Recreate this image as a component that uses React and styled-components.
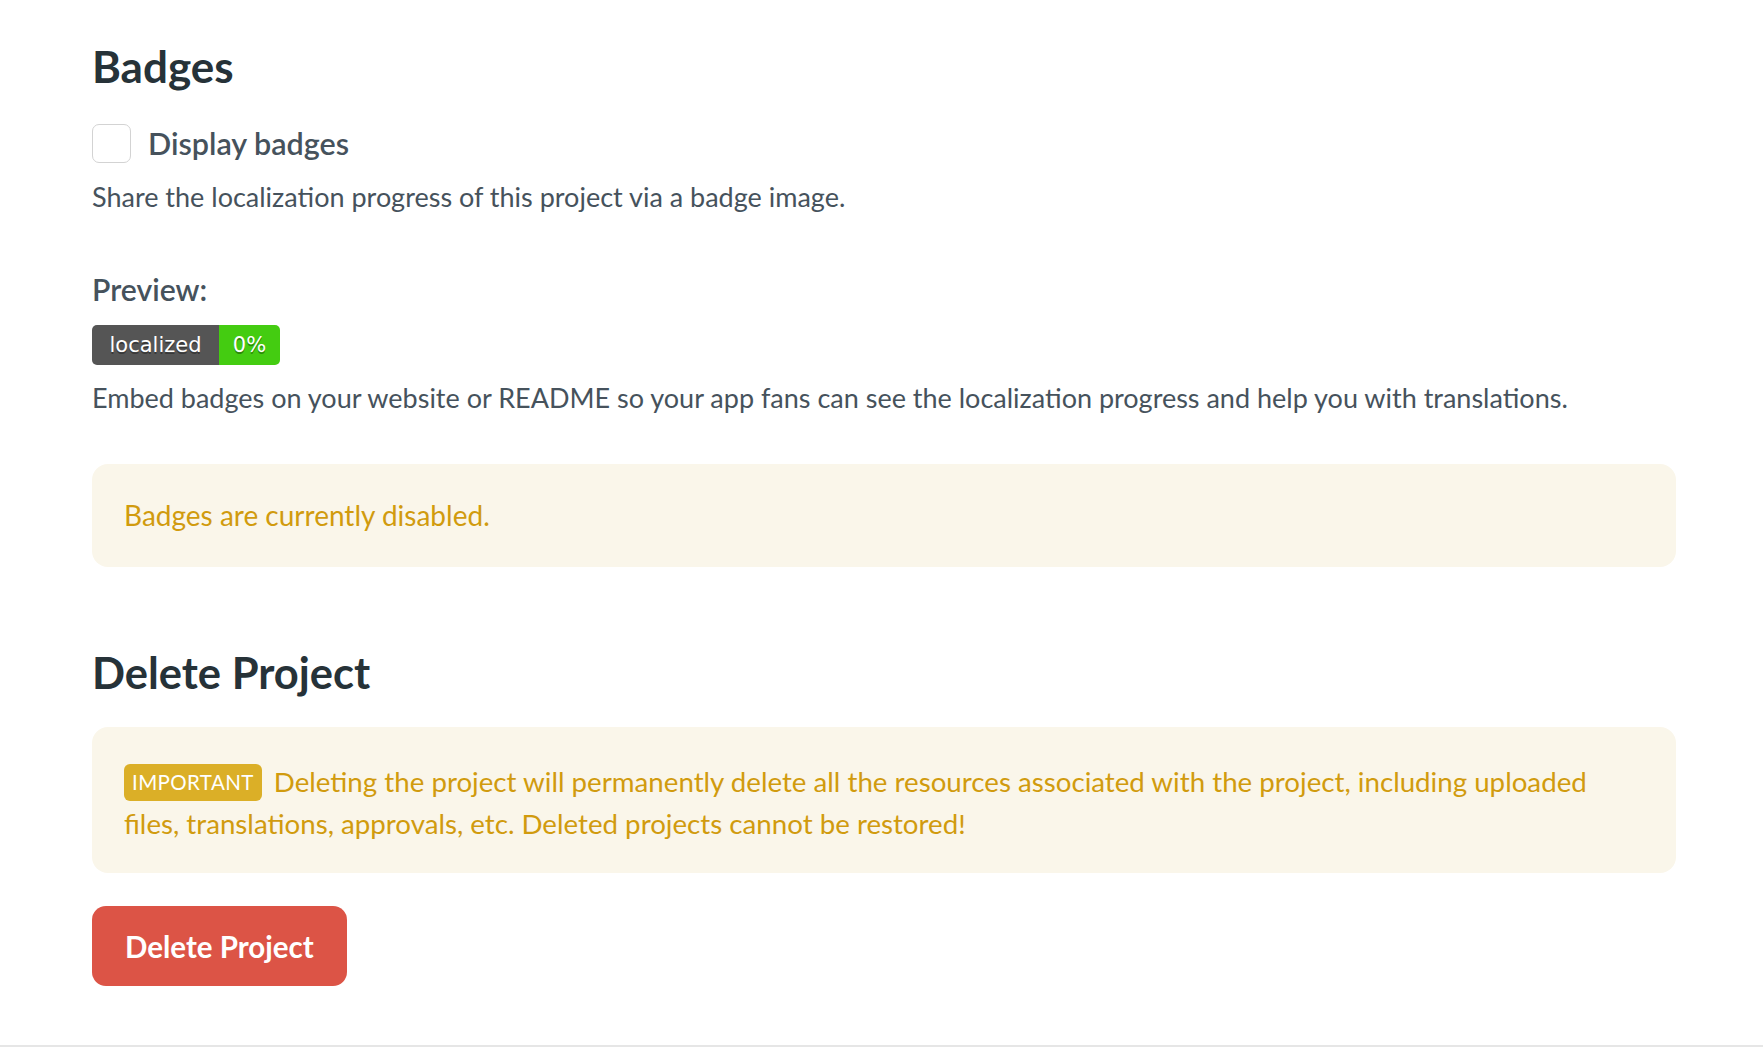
import styled, { createGlobalStyle } from "styled-components";

const GlobalStyle = createGlobalStyle`
  html, body {
    margin: 0;
    padding: 0;
    background: #ffffff;
  }
  body {
    font-family: Lato, "Open Sans", sans-serif;
    color: #46525c;
  }
`;

const Page = styled.div`
  padding: 41px 87px 59px 92px;
  border-bottom: 2px solid #e6e6e6;
`;

const Heading = styled.h2`
  margin: ${props => props.$top || 0}px 0 0 0;
  font-size: ${props => props.$size || 44}px;
  line-height: 50px;
  font-weight: 700;
  color: #263238;
`;

const CheckRow = styled.label`
  display: flex;
  align-items: center;
  gap: 17px;
  margin-top: 33px;
  cursor: pointer;
`;

const Box = styled.span`
  box-sizing: border-box;
  width: 39px;
  height: 39px;
  border: 1.5px solid #d3d3d3;
  border-radius: 7px;
  background: #fff;
  flex-shrink: 0;
`;

const Label = styled.span`
  font-size: 30.5px;
  font-weight: 600;
  line-height: 39px;
  color: #46525c;
`;

const Text = styled.p`
  margin: ${props => props.$top || 0}px 0 0 0;
  font-size: 27px;
  line-height: 36px;
  color: #46525c;
`;

const SubTitle = styled.div`
  margin-top: 56px;
  font-size: 30.2px;
  font-weight: 600;
  line-height: 36px;
  color: #46525c;
`;

const Badge = styled.div`
  display: inline-flex;
  margin-top: 18px;
  height: 40px;
  border-radius: 5px;
  overflow: hidden;
  font-family: "DejaVu Sans", Verdana, sans-serif;
  font-size: 21px;
  color: #fff;
  text-shadow: 0 2px 0 rgba(1, 1, 1, 0.35);
`;

const BadgePart = styled.span`
  display: flex;
  align-items: center;
  justify-content: center;
  width: ${props => props.$w}px;
  background: ${props => props.$bg};
`;

const Alert = styled.div`
  margin-top: ${props => props.$top}px;
  padding: ${props => props.$pad};
  background: #faf6ea;
  border-radius: 16px;
  color: #d19b0e;
  font-size: ${props => props.$size || 28}px;
  line-height: 42px;
`;

const Tag = styled.span`
  display: inline-block;
  vertical-align: 2px;
  height: 37px;
  line-height: 37px;
  padding: 0 8px;
  margin-right: 12px;
  border-radius: 6px;
  background: #dbaf27;
  color: #fff;
  font-size: 20.5px;
  letter-spacing: 0.4px;
`;

const DangerButton = styled.button`
  display: block;
  margin-top: 33px;
  height: 80px;
  padding: 0 33px;
  border: none;
  border-radius: 14px;
  background: #dc5446;
  color: #fff;
  font-family: Lato, "Open Sans", sans-serif;
  font-size: 29.5px;
  font-weight: 700;
  cursor: pointer;
`;

export default function App() {
  return (
    <>
      <GlobalStyle />
      <Page>
        <Heading>Badges</Heading>
        <CheckRow>
          <Box />
          <Label>Display badges</Label>
        </CheckRow>
        <Text $top={16}>Share the localization progress of this project via a badge image.</Text>

        <SubTitle>Preview:</SubTitle>
        <Badge>
          <BadgePart $w={127} $bg="#555555">localized</BadgePart>
          <BadgePart $w={61} $bg="#44cc11">0%</BadgePart>
        </Badge>
        <Text $top={15}>
          Embed badges on your website or README so your app fans can see the localization progress and help you with translations.
        </Text>

        <Alert $top={48} $pad="30px 32px 31px">Badges are currently disabled.</Alert>

        <Heading $top={80} $size={43.5}>Delete Project</Heading>
        <Alert $top={30} $pad="34px 32px 28px" $size={27.7}>
          <Tag>IMPORTANT</Tag>
          Deleting the project will permanently delete all the resources associated with the project, including uploaded files, translations, approvals, etc. Deleted projects cannot be restored!
        </Alert>
        <DangerButton>Delete Project</DangerButton>
      </Page>
    </>
  );
}
